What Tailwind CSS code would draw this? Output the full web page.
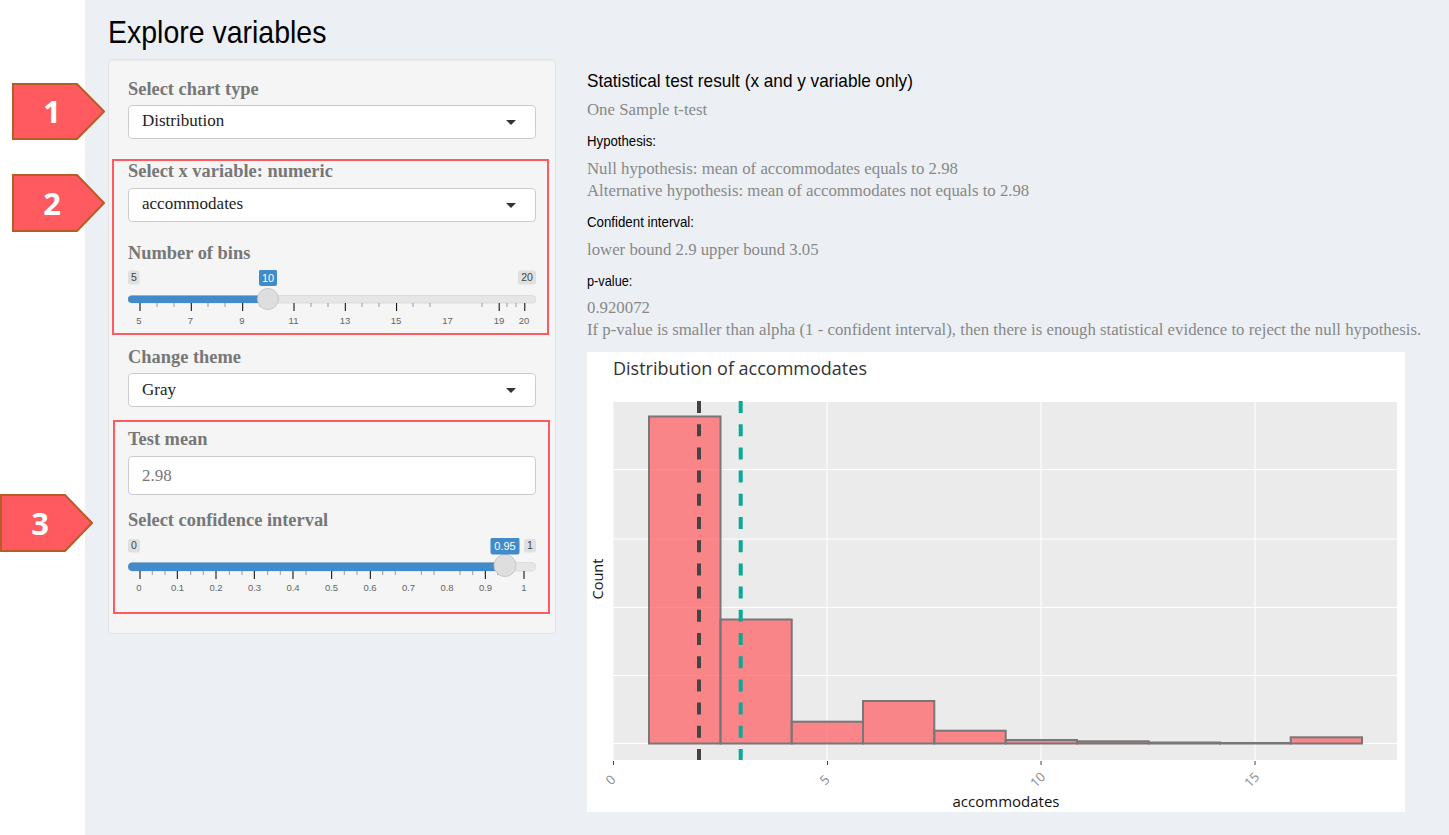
<!DOCTYPE html>
<html lang="en">
<head>
<meta charset="utf-8">
<title>Explore variables</title>
<script src="https://cdn.jsdelivr.net/npm/@tailwindcss/browser@4"></script>
</head>
<body class="bg-white">
<div class="relative flex w-[1449px] h-[835px] overflow-hidden font-['Liberation_Serif',serif]">
  <div class="w-[85px] shrink-0 bg-white"></div>
  <main class="flex-1 bg-[#ecf0f5] pl-[23px] pt-[12px]">
    <h1 class="h-[40px] leading-[40px] text-[32px] text-black font-['Liberation_Sans',sans-serif]"><span class="inline-block origin-left scale-x-[0.89] whitespace-nowrap">Explore variables</span></h1>
    <div class="flex mt-[7px] items-start">
      <section class="relative w-[448px] h-[575px] shrink-0 bg-[#f5f5f5] border border-[#e3e3e3] rounded px-[19px] pt-[19px] shadow-[inset_0_1px_1px_rgba(0,0,0,0.05)]">
        <div class="h-[20px] leading-[20px] text-[18.400px] font-bold text-[#777]">Select chart type</div>
        <div class="mt-[6px] h-[34px] flex items-center justify-between bg-white border border-[#ccc] rounded pl-[13px] pr-[19px] text-[17px] leading-[30px] text-[#222]"><span class="-mt-[2px]">Distribution</span><span class="w-0 h-0 border-x-[5px] border-x-transparent border-t-[5px] border-t-[#333]"></span></div>
        <div class="mt-[22px] h-[20px] leading-[20px] text-[18.400px] font-bold text-[#777]">Select x variable: numeric</div>
        <div class="mt-[7px] h-[34px] flex items-center justify-between bg-white border border-[#ccc] rounded pl-[13px] pr-[19px] text-[17px] leading-[30px] text-[#222]"><span class="-mt-[2px]">accommodates</span><span class="w-0 h-0 border-x-[5px] border-x-transparent border-t-[5px] border-t-[#333]"></span></div>
        <div class="mt-[21px] h-[20px] leading-[20px] text-[18.400px] font-bold text-[#777]">Number of bins</div>
        <svg class="mt-[7px] block" width="408" height="60" viewBox="128 270 408 60" font-family="Liberation Sans, sans-serif" font-size="9.500" text-anchor="middle">
          <rect x="128" y="295.500" width="408" height="7.500" rx="3.750" fill="#e6e6e6" stroke="#dcdcdc"/>
          <rect x="128" y="295.500" width="140" height="7.500" rx="3.750" fill="#428bca"/>
          <g stroke="#000" stroke-width="1">
            <path d="M140 303v8M191.300 303v8M242.700 303v8M294 303v8M345.300 303v8M396.600 303v8M499.200 303v8M524.800 303v8"/>
            <path stroke="#999" d="M157 303v4M174 303v4M208 303v4M225 303v4M260 303v4M311 303v4M328 303v4M362 303v4M379 303v4M413 303v4M430 303v4M482 303v4M507 303v4M516 303v4"/>
          </g>
          <g fill="#666">
            <text x="139" y="323.500">5</text><text x="190.500" y="323.500">7</text><text x="242" y="323.500">9</text><text x="293.500" y="323.500">11</text><text x="345" y="323.500">13</text><text x="396" y="323.500">15</text><text x="447.500" y="323.500">17</text><text x="499" y="323.500">19</text><text x="524" y="323.500">20</text>
          </g>
          <rect x="128" y="270.500" width="11.500" height="14" rx="2.500" fill="#e0e0e0"/>
          <text x="134" y="280.500" fill="#444" font-size="10.500">5</text>
          <rect x="518" y="270.500" width="18" height="14" rx="2.500" fill="#e0e0e0"/>
          <text x="527" y="280.500" fill="#444" font-size="10.500">20</text>
          <circle cx="268" cy="299" r="10.500" fill="#dedede" stroke="#c8c8c8"/>
          <rect x="259" y="269.500" width="18" height="16.500" rx="2.500" fill="#428bca"/>
          <text x="268" y="281.500" fill="#fff" font-size="11">10</text>
        </svg>
        <div class="mt-[17px] h-[20px] leading-[20px] text-[18.400px] font-bold text-[#777]">Change theme</div>
        <div class="mt-[6px] h-[34px] flex items-center justify-between bg-white border border-[#ccc] rounded pl-[13px] pr-[19px] text-[17px] leading-[30px] text-[#222]"><span>Gray</span><span class="w-0 h-0 border-x-[5px] border-x-transparent border-t-[5px] border-t-[#333]"></span></div>
        <div class="mt-[22px] h-[20px] leading-[20px] text-[18.400px] font-bold text-[#777]">Test mean</div>
        <div class="mt-[7px] h-[39px] flex items-center bg-white border border-[#ccc] rounded pl-[13px] text-[17px] text-[#777] oldstyle-nums">2.98</div>
        <div class="mt-[15px] h-[20px] leading-[20px] text-[18.400px] font-bold text-[#777]">Select confidence interval</div>
        <svg class="mt-[8px] block" width="408" height="62" viewBox="128 538 408 62" font-family="Liberation Sans, sans-serif" font-size="9.500" text-anchor="middle">
          <rect x="128" y="562.500" width="408" height="8.500" rx="4.250" fill="#e6e6e6" stroke="#dcdcdc"/>
          <rect x="128" y="562.500" width="377" height="8.500" rx="4.250" fill="#428bca"/>
          <g stroke="#000" stroke-width="1">
            <path d="M140 571v8M177.300 571v8M216 571v8M254.300 571v8M293 571v8M331.700 571v8M370.300 571v8M485.300 571v8M524 571v8"/>
            <path stroke="#999" d="M152.300 571v4M165 571v4M190.700 571v4M203.300 571v4M229.300 571v4M242 571v4M267.700 571v4M280.300 571v4M306 571v4M344.300 571v4M357 571v4M382.700 571v4M395.300 571v4M421.300 571v4M434 571v4M460 571v4M472.700 571v4M497.700 571v4M510 571v4"/>
          </g>
          <g fill="#666">
            <text x="139" y="590.500">0</text><text x="177.500" y="590.500">0.1</text><text x="216" y="590.500">0.2</text><text x="254.500" y="590.500">0.3</text><text x="293" y="590.500">0.4</text><text x="331.500" y="590.500">0.5</text><text x="370" y="590.500">0.6</text><text x="408.500" y="590.500">0.7</text><text x="447" y="590.500">0.8</text><text x="485.500" y="590.500">0.9</text><text x="524" y="590.500">1</text>
          </g>
          <rect x="128" y="539" width="12" height="13.500" rx="2.500" fill="#e0e0e0"/>
          <text x="134" y="549" fill="#444" font-size="10.500">0</text>
          <rect x="524" y="539" width="12" height="13.500" rx="2.500" fill="#e0e0e0"/>
          <text x="530" y="549" fill="#444" font-size="10.500">1</text>
          <circle cx="505" cy="565.500" r="11" fill="#dedede" stroke="#c8c8c8"/>
          <rect x="490.500" y="537.500" width="29" height="17" rx="2.500" fill="#428bca"/>
          <text x="505" y="550" fill="#fff" font-size="11">0.95</text>
        </svg>
        <div class="absolute left-[3px] top-[99px] w-[437px] h-[176px] border-2 border-[#ff5a5f]"></div>
        <div class="absolute left-[4px] top-[360px] w-[437px] h-[194px] border-2 border-[#ff5a5f]"></div>
      </section>
      <section class="ml-[31px] w-[818px]">
        <h2 class="mt-[10px] h-[24px] leading-[24px] text-[19px] text-black font-['Liberation_Sans',sans-serif]"><span class="inline-block origin-left scale-x-[0.905] whitespace-nowrap">Statistical test result (x and y variable only)</span></h2>
        <p class="mt-[7px] h-[20px] leading-[20px] text-[16.800px] text-[#888]">One Sample t-test</p>
        <h3 class="mt-[11px] h-[20px] leading-[20px] text-[15px] text-black font-['Liberation_Sans',sans-serif]"><span class="inline-block origin-left scale-x-[0.88] whitespace-nowrap">Hypothesis:</span></h3>
        <p class="mt-[7px] leading-[22px] text-[16.800px] text-[#888] oldstyle-nums">Null hypothesis: mean of accommodates equals to 2.98<br>Alternative hypothesis: mean of accommodates not equals to 2.98</p>
        <h3 class="mt-[10px] h-[20px] leading-[20px] text-[15px] text-black font-['Liberation_Sans',sans-serif]"><span class="inline-block origin-left scale-x-[0.885] whitespace-nowrap">Confident interval:</span></h3>
        <p class="mt-[8px] h-[20px] leading-[20px] text-[16.800px] text-[#888] oldstyle-nums">lower bound 2.9 upper bound 3.05</p>
        <h3 class="mt-[11px] h-[20px] leading-[20px] text-[15px] text-black font-['Liberation_Sans',sans-serif]"><span class="inline-block origin-left scale-x-[0.85] whitespace-nowrap">p-value:</span></h3>
        <p class="mt-[6px] leading-[22px] text-[16.800px] text-[#888] whitespace-nowrap oldstyle-nums">0.920072<br>If p-value is smaller than alpha (1 - confident interval), then there is enough statistical evidence to reject the null hypothesis.</p>
        <svg class="mt-[11px] block bg-white" width="818" height="460" viewBox="587 352 818 460" font-family="Open Sans, sans-serif">
          <text x="613" y="375" font-size="18" fill="#333">Distribution of accommodates</text>
          <rect x="613" y="401" width="784" height="359" fill="#ebebeb"/>
          <path d="M613 401.500H1397M613 469.500H1397M613 539H1397M613 607.500H1397M613 675.500H1397M613 743.500H1397M613 401V760M827 401V760M1041 401V760M1255 401V760" stroke="#fff" stroke-width="1" fill="none"/>
          <g fill="#ff5a5f" fill-opacity="0.7" stroke="#777" stroke-width="2">
            <rect x="649" y="416.500" width="71.500" height="327"/>
            <rect x="720.500" y="619.500" width="71.200" height="124"/>
            <rect x="791.700" y="721.700" width="71.300" height="21.800"/>
            <rect x="863" y="701" width="71.300" height="42.500"/>
            <rect x="934.300" y="730.700" width="71.400" height="12.800"/>
            <rect x="1005.700" y="740" width="71.300" height="3.500"/>
            <rect x="1077" y="741.300" width="71.700" height="2.200"/>
            <rect x="1148.700" y="742.500" width="71.300" height="1"/>
            <rect x="1220" y="743" width="70.700" height="0.500"/>
            <rect x="1290.700" y="737.300" width="71.300" height="6.200"/>
          </g>
          <path d="M699 401V760" stroke="#444" stroke-width="4" stroke-dasharray="12 11.200"/>
          <path d="M740.700 401V760" stroke="#0ba898" stroke-width="4" stroke-dasharray="12 11.200"/>
          <path d="M613.500 761V765M827.500 761V765M1041 761V765M1255 761V765" stroke="#444" stroke-width="1"/>
          <g font-size="13" fill="#888" text-anchor="middle">
            <text transform="translate(614 783) rotate(-45)">0</text>
            <text transform="translate(828 783) rotate(-45)">5</text>
            <text transform="translate(1041 783) rotate(-45)">10</text>
            <text transform="translate(1255 783) rotate(-45)">15</text>
          </g>
          <text transform="translate(603 579) rotate(-90)" font-size="14.500" fill="#111" text-anchor="middle">Count</text>
          <text x="1006" y="807" font-size="15" fill="#111" text-anchor="middle">accommodates</text>
        </svg>
      </section>
    </div>
  </main>
  <div class="absolute left-[12px] top-[83px] w-[93px] h-[57px] flex items-center"><svg class="absolute inset-0" width="93" height="57"><path d="M1 1H65L92 28.500L65 56H1Z" fill="#ff5a5f" stroke="#b85c25" stroke-width="2"/></svg><span class="relative w-[80px] text-center text-white font-bold text-[31px] font-['Open_Sans',sans-serif]">1</span></div>
  <div class="absolute left-[12px] top-[174px] w-[93px] h-[58px] flex items-center"><svg class="absolute inset-0" width="93" height="58"><path d="M1 1H65L92 29L65 57H1Z" fill="#ff5a5f" stroke="#b85c25" stroke-width="2"/></svg><span class="relative w-[80px] text-center text-white font-bold text-[31px] font-['Open_Sans',sans-serif]">2</span></div>
  <div class="absolute left-0 top-[494px] w-[93px] h-[58px] flex items-center"><svg class="absolute inset-0" width="93" height="58"><path d="M1 1H65L92 29L65 57H1Z" fill="#ff5a5f" stroke="#b85c25" stroke-width="2"/></svg><span class="relative w-[80px] text-center text-white font-bold text-[31px] font-['Open_Sans',sans-serif]">3</span></div>
</div>
</body>
</html>
